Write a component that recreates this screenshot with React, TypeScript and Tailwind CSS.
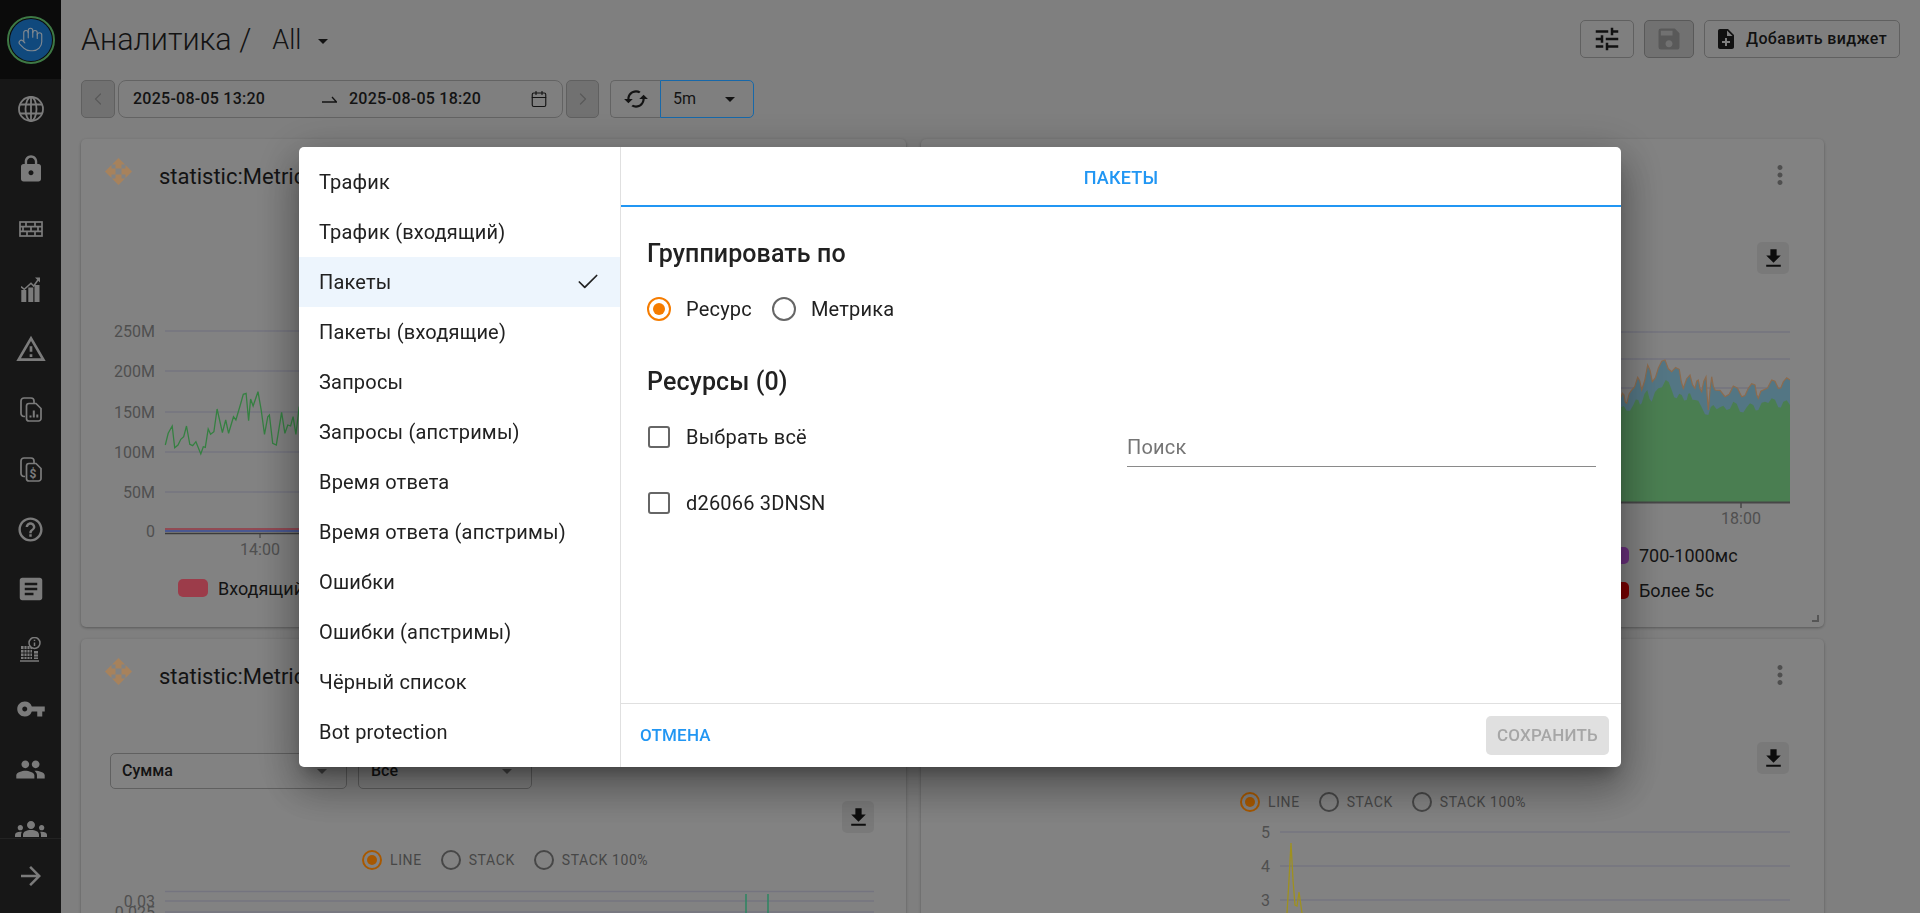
import { Calendar, Check, ChevronLeft, ChevronRight, Hand } from "lucide-react";
import {
  MdArrowDropDown,
  MdArrowForward,
  MdArticle,
  MdCached,
  MdFileDownload,
  MdGroups,
  MdHelpOutline,
  MdLock,
  MdMoreVert,
  MdNoteAdd,
  MdOutlineWarningAmber,
  MdPeople,
  MdSave,
  MdTune,
  MdVpnKey,
} from "react-icons/md";

const metrics = [
  "Трафик",
  "Трафик (входящий)",
  "Пакеты",
  "Пакеты (входящие)",
  "Запросы",
  "Запросы (апстримы)",
  "Время ответа",
  "Время ответа (апстримы)",
  "Ошибки",
  "Ошибки (апстримы)",
  "Чёрный список",
  "Bot protection",
];

const greenLine = [
  [405, 435], [412, 400], [422, 378], [428, 443], [436, 435], [443, 418], [450, 410], [457, 378],
  [465, 433], [472, 437], [480, 425], [492, 462], [498, 440], [503, 442], [510, 387], [516, 403],
  [524, 395], [532, 327], [545, 398], [553, 360], [560, 400], [572, 350], [578, 360], [590, 310],
  [596, 283], [603, 280], [609, 362], [614, 297], [620, 318], [632, 275], [640, 330], [648, 403],
  [656, 350], [660, 345], [668, 430], [677, 435], [690, 337], [698, 400], [705, 375], [712, 378],
  [718, 350], [725, 403], [733, 320],
]
  .map(([x, y]) => `${(x / 2.45 - 81).toFixed(1)},${(y / 3 - 20).toFixed(1)}`)
  .join(" ");

// adds a small zigzag between the traced points so the stacked area looks like real samples
const toRight = (pts: number[][]) =>
  pts
    .flatMap(([x, y], i) => {
      const next = pts[i + 1];
      if (!next) return [[x, y]];
      return [[x, y], [(x + next[0]) / 2, (y + next[1]) / 2 + (i % 2 ? 9 : -9)]];
    })
    .map(([x, y]) => `${(x / 3 + 479).toFixed(1)},${(y / 3).toFixed(1)}`)
    .join(" ");

const greenTop = [
  [663, 262], [680, 272], [700, 255], [715, 240], [725, 250], [742, 210], [755, 245], [775, 205],
  [797, 180], [815, 210], [830, 235], [845, 225], [860, 240], [870, 220], [885, 240], [905, 262],
  [925, 285], [940, 255], [960, 262], [980, 270], [1000, 245], [1020, 275], [1040, 262], [1060, 255],
  [1075, 270], [1095, 245], [1115, 235], [1135, 262], [1150, 245], [1170, 255],
];

const tealTop = [
  [663, 232], [672, 225], [680, 250], [695, 210], [713, 172], [725, 210], [743, 135], [757, 185],
  [775, 145], [795, 120], [815, 155], [838, 148], [850, 205], [870, 165], [885, 205], [895, 180],
  [905, 215], [918, 170], [925, 270], [935, 170], [945, 210], [975, 230], [1000, 198], [1025, 230],
  [1045, 205], [1065, 195], [1075, 235], [1090, 210], [1115, 180], [1135, 205], [1150, 185], [1170, 180],
];

function GlobeIcon() {
  return (
    <svg width="26" height="26" viewBox="0 0 26 26" fill="none" stroke="currentColor" strokeWidth="1.8">
      <circle cx="13" cy="13" r="12" />
      <ellipse cx="13" cy="13" rx="5.5" ry="12" />
      <path d="M13 1v24M2 8.5h22M2 17.5h22" />
    </svg>
  );
}

function WallIcon() {
  return (
    <svg width="24" height="16" viewBox="0 0 24 16" fill="none" stroke="currentColor" strokeWidth="1.7">
      <rect x="1" y="1" width="22" height="14" />
      <path d="M1 5.7h22M1 10.3h22M7 1v4.7M16 1v4.7M4 5.7v4.6M12 5.7v4.6M19 5.7v4.6M8 10.3V15M16 10.3V15" />
    </svg>
  );
}

function GrowthIcon() {
  return (
    <svg width="20" height="25" viewBox="0 0 20 25" fill="currentColor">
      <rect x="0.3" y="13" width="5" height="12" />
      <rect x="7.3" y="10.5" width="5" height="14.5" />
      <rect x="13.5" y="8" width="5" height="17" />
      <path d="M0 9.7l3.3 2.6L10 6.3l2.7 2.7L18 1.5" fill="none" stroke="currentColor" strokeWidth="1.5" />
      <path d="M14 .5h5v5z" />
    </svg>
  );
}

function DocsIcon({ dollar }: { dollar?: boolean }) {
  return (
    <svg width="22" height="25" viewBox="0 0 22 25" fill="none" stroke="currentColor" strokeWidth="1.7">
      <path d="M5 19.5H4a3 3 0 0 1-3-3V4a3 3 0 0 1 3-3h7a3 3 0 0 1 3 3v2.5" />
      <path d="M9 6.5h7l5 5v10a2.5 2.5 0 0 1-2.5 2.5H9a2.5 2.5 0 0 1-2.5-2.5V9A2.5 2.5 0 0 1 9 6.500z" />
      {dollar ? (
        <text x="9.500" y="21" fontSize="12" fontWeight="700" fill="currentColor" stroke="none" fontFamily="Roboto, sans-serif">
          $
        </text>
      ) : (
        <path d="M10.500 20.500v-2M13.800 20.500v-7M17.300 20.500v-3" strokeWidth="2" />
      )}
    </svg>
  );
}

function BuildingInfoIcon() {
  return (
    <svg width="21" height="25" viewBox="0 0 21 25" fill="none">
      <path d="M1 9h11v13H1zM14 14h4v8h-4z" fill="currentColor" />
      <path d="M1 12.500h12M1 16h12M1 19.500h12M4 9v13M7 9v13M10 9v13M14 17h4M14 20h4" stroke="#222222" strokeWidth="0.9" />
      <path d="M0 24h19" stroke="currentColor" strokeWidth="1.500" />
      <circle cx="14.500" cy="6" r="5.500" fill="#222222" stroke="currentColor" strokeWidth="1.500" />
      <path d="M14.500 5.500v3.500M14.500 2.800v1.300" stroke="currentColor" strokeWidth="1.500" />
    </svg>
  );
}

function MoveIcon() {
  const arm = "M13.500 0L20 6.500h-3.500v4h-6v-4H7z";
  return (
    <svg width="27" height="27" viewBox="0 0 27 27" fill="#f0bb84">
      <path d={arm} />
      <path d={arm} transform="rotate(90 13.500 13.500)" />
      <path d={arm} transform="rotate(180 13.500 13.500)" />
      <path d={arm} transform="rotate(270 13.500 13.500)" />
    </svg>
  );
}

function SwapRight() {
  return (
    <svg width="15" height="8" viewBox="0 0 15 8" fill="none" stroke="#1c1c1c" strokeWidth="1.300">
      <path d="M0 7h14.500L10 2" />
    </svg>
  );
}

function Sidebar() {
  const icons = [
    <GlobeIcon />,
    <MdLock size={30} />,
    <WallIcon />,
    <GrowthIcon />,
    <MdOutlineWarningAmber size={32} />,
    <DocsIcon />,
    <DocsIcon dollar />,
    <MdHelpOutline size={29} />,
    <MdArticle size={30} />,
    <BuildingInfoIcon />,
    <MdVpnKey size={30} />,
    <MdPeople size={31} />,
    <MdGroups size={32} />,
  ];
  return (
    <aside className="w-[61px] shrink-0 h-full bg-[#222222] flex flex-col text-[#b1b1b1]">
      <div className="h-[79px] shrink-0 bg-[#111111] flex items-center justify-center">
        <div className="w-[48px] h-[48px] rounded-full border-2 border-[#5aae63] flex items-center justify-center">
          <div className="w-[42px] h-[42px] rounded-full bg-[#1769b3] flex items-center justify-center text-[#b9c4cf]">
            <Hand size={27} strokeWidth={1} />
          </div>
        </div>
      </div>
      <div className="flex-1 overflow-hidden">
        {icons.map((icon, i) => (
          <div key={i} className="h-[60px] flex items-center justify-center">
            {icon}
          </div>
        ))}
      </div>
      <div className="h-[75px] shrink-0 border-t border-[#333333] flex items-center justify-center">
        <MdArrowForward size={30} />
      </div>
    </aside>
  );
}

function TopBar() {
  return (
    <div className="h-[38px] mt-[20px] pr-[20px] flex items-center justify-between">
      <div className="flex items-center text-[#1c1c1c] font-light pt-[2px]">
        <span className="text-[30.5px]">Аналитика /</span>
        <span className="text-[27px] ml-[21px]">All</span>
        <MdArrowDropDown size={24} className="ml-[10px] mt-[2px]" />
      </div>
      <div className="flex items-center gap-[10px] text-[#191919]">
        <button className="w-[54px] h-[38px] rounded-[5px] border border-[#8a8a8a] flex items-center justify-center">
          <MdTune size={30} />
        </button>
        <button className="w-[50px] h-[38px] rounded-[5px] border border-[#808080] bg-[#a3a3a3] flex items-center justify-center text-[#808080]">
          <MdSave size={28} />
        </button>
        <button className="w-[196px] h-[38px] rounded-[5px] border border-[#8a8a8a] pl-[9px] flex items-center text-[16px] font-medium tracking-[0.4px]">
          <MdNoteAdd size={24} />
          <span className="ml-[8px]">Добавить виджет</span>
        </button>
      </div>
    </div>
  );
}

function DateBar() {
  return (
    <div className="h-[38px] mt-[22px] flex text-[#1c1c1c]">
      <button className="w-[34px] rounded-[5px] border border-[#8a8a8a] bg-[#a3a3a3] flex items-center justify-center text-[#808080]">
        <ChevronLeft size={20} strokeWidth={1.6} />
      </button>
      <div className="w-[445px] ml-[3px] rounded-[8px] border border-[#8f8f8f] flex items-center text-[16px] font-medium tracking-[0.25px] whitespace-nowrap pl-[14px]">
        <span className="w-[132px]">2025-08-05 13:20</span>
        <span className="ml-[57px]">
          <SwapRight />
        </span>
        <span className="ml-[12px] w-[132px]">2025-08-05 18:20</span>
        <Calendar size={18} strokeWidth={1.5} className="ml-[49px]" />
      </div>
      <button className="w-[33px] ml-[3px] rounded-[5px] border border-[#8a8a8a] bg-[#a3a3a3] flex items-center justify-center text-[#808080]">
        <ChevronRight size={20} strokeWidth={1.6} />
      </button>
      <button className="w-[50px] ml-[11px] rounded-l-[5px] border border-r-0 border-[#8f8f8f] flex items-center justify-center">
        <MdCached size={26} />
      </button>
      <div className="w-[94px] rounded-r-[5px] border border-[#2196f3] flex items-center pl-[12px] pr-[11px] justify-between text-[16px]">
        <span>5m</span>
        <MdArrowDropDown size={24} />
      </div>
    </div>
  );
}

function CardHeader() {
  return (
    <header className="h-[72px] shrink-0 flex items-center pl-[24px] pr-[29px]">
      <span className="mb-[8px]">
        <MoveIcon />
      </span>
      <span className="ml-[27px] text-[22px] text-[#1c1c1c] mt-[2px]">statistic:Metric</span>
      <span className="ml-auto text-[#717171]">
        <MdMoreVert size={30} />
      </span>
    </header>
  );
}

function DownloadButton({ className }: { className: string }) {
  return (
    <div className={"w-[32px] h-[32px] rounded-[5px] bg-[#aeaeae] flex items-center justify-center text-[#141414] self-end " + className}>
      <MdFileDownload size={25} />
    </div>
  );
}

function ChartMode({ className }: { className: string }) {
  return (
    <div className={"h-[20px] flex items-center text-[14px] text-[#666666] tracking-[0.6px] " + className}>
      <span className="w-[20px] h-[20px] rounded-full border-2 border-[#f07f00] flex items-center justify-center">
        <span className="w-[10px] h-[10px] rounded-full bg-[#f07f00]" />
      </span>
      <span className="ml-[8px]">LINE</span>
      <span className="w-[20px] h-[20px] rounded-full border-2 border-[#666666] ml-[19px]" />
      <span className="ml-[8px]">STACK</span>
      <span className="w-[20px] h-[20px] rounded-full border-2 border-[#666666] ml-[19px]" />
      <span className="ml-[8px]">STACK 100%</span>
    </div>
  );
}

function Grid({ left, right, lines }: { left: number; right: number; lines: [string, number][] }) {
  return (
    <>
      {lines.map(([label, y]) => (
        <g key={label}>
          <line x1={left} x2={right} y1={y} y2={y} stroke="#a7a7b7" strokeWidth="1.300" />
          <text x={left - 10} y={y + 5.500} textAnchor="end" fontSize="16" fill="#727272">
            {label}
          </text>
        </g>
      ))}
    </>
  );
}

function TrafficCard() {
  return (
    <section className="w-[825px] h-[488px] shrink-0 rounded-[5px] bg-[#bbbbbb] shadow-[0_1px_3px_rgba(0,0,0,.3)] flex flex-col">
      <CardHeader />
      <svg className="mt-[109px] shrink-0" width="825" height="240" viewBox="0 0 825 240">
        <Grid left={84} right={795} lines={[["250M", 11], ["200M", 51], ["150M", 92], ["100M", 132], ["50M", 172], ["0", 211]]} />
        <polyline points={greenLine} fill="none" stroke="#4cb85e" strokeWidth="1.300" />
        <path d="M84 209h711" stroke="#d06a78" strokeWidth="2" />
        <path d="M84 211h711" stroke="#6a7fd0" strokeWidth="2" />
        <path d="M84 213.500h711" stroke="#555555" strokeWidth="1.500" />
        <path d="M179 213v5" stroke="#555555" />
        <text x="179" y="235" textAnchor="middle" fontSize="16" fill="#727272">
          14:00
        </text>
      </svg>
      <div className="mt-[19px] pl-[97px] flex items-center h-[18px]">
        <span className="w-[30px] h-[18px] rounded-[5px] bg-[#e0566a]" />
        <span className="ml-[10px] text-[18px] text-[#1c1c1c]">Входящий</span>
      </div>
    </section>
  );
}

function ResponseTimeCard() {
  const top = toRight(tealTop);
  const mid = toRight(greenTop);
  return (
    <section className="relative w-[903px] h-[488px] shrink-0 rounded-[5px] bg-[#bbbbbb] shadow-[0_1px_3px_rgba(0,0,0,.3)] flex flex-col">
      <CardHeader />
      <DownloadButton className="mt-[31px] mr-[35px]" />
      <svg className="mt-[46px] shrink-0" width="903" height="205" viewBox="0 0 903 205">
        <path d="M84 12H869M84 39H869M84 68H869" stroke="#a7a7b7" strokeWidth="1.300" />
        <polygon points={`700,182 ${top} 869,182`} fill="#78a9bd" />
        <polyline points={top} fill="none" stroke="#c99a70" strokeWidth="1.200" />
        <polygon points={`700,182 ${mid} 869,182`} fill="#6bb575" />
        <path d="M700 182.500H869" stroke="#666666" strokeWidth="2" />
        <path d="M820 182v6" stroke="#666666" strokeWidth="1.500" />
        <text x="820" y="204" textAnchor="middle" fontSize="16" fill="#727272">
          18:00
        </text>
      </svg>
      <div className="mt-[22px] pl-[678px] flex flex-col gap-[18px] text-[18px] text-[#1c1c1c]">
        <div className="h-[17px] flex items-center">
          <span className="w-[30px] h-[17px] rounded-[5px] bg-[#9a45b5]" />
          <span className="ml-[10px]">700-1000мс</span>
        </div>
        <div className="h-[17px] flex items-center">
          <span className="w-[30px] h-[17px] rounded-[5px] bg-[#b30000]" />
          <span className="ml-[10px]">Более 5с</span>
        </div>
      </div>
      <span className="absolute right-[5px] bottom-[5px] w-[7px] h-[7px] border-r-2 border-b-2 border-[#7c7c7c]" />
    </section>
  );
}

function SumCard() {
  return (
    <section className="w-[825px] h-[488px] shrink-0 rounded-[5px] bg-[#bbbbbb] shadow-[0_1px_3px_rgba(0,0,0,.3)] flex flex-col">
      <CardHeader />
      <div className="mt-[42px] pl-[29px] flex gap-[11px] text-[16px] font-medium text-[#1c1c1c]">
        <div className="w-[237px] h-[36px] rounded-[5px] border border-[#8a8a8a] flex items-center justify-between pl-[11px] pr-[12px]">
          <span>Сумма</span>
          <MdArrowDropDown size={24} className="text-[#606060]" />
        </div>
        <div className="w-[174px] h-[36px] rounded-[5px] border border-[#8a8a8a] flex items-center justify-between pl-[12px] pr-[12px]">
          <span>Все</span>
          <MdArrowDropDown size={24} className="text-[#606060]" />
        </div>
      </div>
      <DownloadButton className="mt-[12px] mr-[32px]" />
      <ChartMode className="mt-[17px] ml-[281px]" />
      <svg className="mt-[11px] shrink-0" width="825" height="60" viewBox="0 0 825 60">
        <Grid left={84} right={793} lines={[["0.03", 20], ["0.025", 31]]} />
        <path d="M84 10.500H793" stroke="#a7a7b7" strokeWidth="1.300" />
        <path d="M665 13v30M687 13v30" stroke="#3fbf8c" strokeWidth="1.500" />
      </svg>
    </section>
  );
}

function SpikeCard() {
  return (
    <section className="w-[903px] h-[488px] shrink-0 rounded-[5px] bg-[#bbbbbb] shadow-[0_1px_3px_rgba(0,0,0,.3)] flex flex-col">
      <CardHeader />
      <DownloadButton className="mt-[31px] mr-[35px]" />
      <ChartMode className="mt-[18px] ml-[319px]" />
      <svg className="mt-[13px] shrink-0" width="903" height="100" viewBox="0 0 903 100">
        <Grid left={359} right={869} lines={[["5", 7], ["4", 41], ["3", 75]]} />
        <polyline points="366,88 368,55 370,18 372,55 374,80 376,81 378,67 381,88" fill="none" stroke="#e3cf2e" strokeWidth="1.300" />
      </svg>
    </section>
  );
}

function Radio({ checked, label }: { checked?: boolean; label: string }) {
  return (
    <label className="h-[24px] flex items-center">
      <span className={"w-[24px] h-[24px] rounded-full border-2 flex items-center justify-center " + (checked ? "border-[#f57c00]" : "border-[#666666]")}>
        {checked && <span className="w-[12px] h-[12px] rounded-full bg-[#f57c00]" />}
      </span>
      <span className="ml-[15px]">{label}</span>
    </label>
  );
}

function Checkbox({ label }: { label: string }) {
  return (
    <label className="h-[24px] flex items-center">
      <span className="w-[22px] h-[22px] ml-[1px] rounded-[3px] border-2 border-[#666666]" />
      <span className="ml-[16px]">{label}</span>
    </label>
  );
}

function WidgetDialog() {
  return (
    <div className="fixed inset-0 bg-black/30 flex items-center justify-center">
      <div className="w-[1322px] h-[620px] rounded-[5px] bg-white flex text-[20px] tracking-[0.19px] text-[#212121] shadow-[0_11px_15px_-7px_rgba(0,0,0,.3),0_24px_38px_3px_rgba(0,0,0,.2),0_9px_46px_8px_rgba(0,0,0,.2)]">
        <nav className="w-[322px] shrink-0 py-[10px] border-r border-[#e0e0e0]">
          {metrics.map((name) => (
            <div key={name} className={"h-[50px] pl-[20px] pr-[19px] flex items-center justify-between " + (name === "Пакеты" ? "bg-[#edf5fd]" : "")}>
              <span>{name}</span>
              {name === "Пакеты" && <Check size={26} strokeWidth={1.600} />}
            </div>
          ))}
        </nav>
        <div className="flex-1 flex flex-col min-w-0">
          <div className="h-[60px] shrink-0 pt-[3px] border-b-2 border-[#2196f3] flex items-center justify-center text-[18px] font-medium text-[#2196f3]">
            ПАКЕТЫ
          </div>
          <div className="flex-1 pl-[26px] flex flex-col">
            <h2 className="mt-[31px] h-[32px] leading-[32px] text-[25px] tracking-[0.1px] font-medium">Группировать по</h2>
            <div className="mt-[27px] flex gap-[20px]">
              <Radio checked label="Ресурс" />
              <Radio label="Метрика" />
            </div>
            <h2 className="mt-[45px] h-[32px] leading-[32px] text-[25px] tracking-[0.1px] font-medium">Ресурсы (0)</h2>
            <div className="mt-[27px] flex justify-between pr-[25px]">
              <div className="flex flex-col gap-[42px]">
                <Checkbox label="Выбрать всё" />
                <Checkbox label="d26066 3DNSN" />
              </div>
              <input
                placeholder="Поиск"
                className="w-[469px] h-[39px] mt-[3px] border-b border-[#8a8a8a] outline-none placeholder:text-[#757575]"
              />
            </div>
          </div>
          <div className="h-[64px] shrink-0 pt-[2px] border-t border-[#e0e0e0] flex items-center justify-between pl-[19px] pr-[12px] text-[17px] font-medium">
            <span className="text-[#2196f3]">ОТМЕНА</span>
            <button className="w-[123px] h-[39px] -mt-[2px] pt-[2px] rounded-[5px] bg-[#e0e0e0] text-[#a6a6a6]">СОХРАНИТЬ</button>
          </div>
        </div>
      </div>
    </div>
  );
}

export default function App() {
  return (
    <div className="h-[913px] overflow-hidden flex bg-[#b7b7b7] font-['Roboto',sans-serif]">
      <Sidebar />
      <main className="flex-1 pl-[20px] min-w-0">
        <TopBar />
        <DateBar />
        <div className="mt-[21px] flex gap-[15px]">
          <TrafficCard />
          <ResponseTimeCard />
        </div>
        <div className="mt-[12px] flex gap-[15px]">
          <SumCard />
          <SpikeCard />
        </div>
      </main>
      <WidgetDialog />
    </div>
  );
}
